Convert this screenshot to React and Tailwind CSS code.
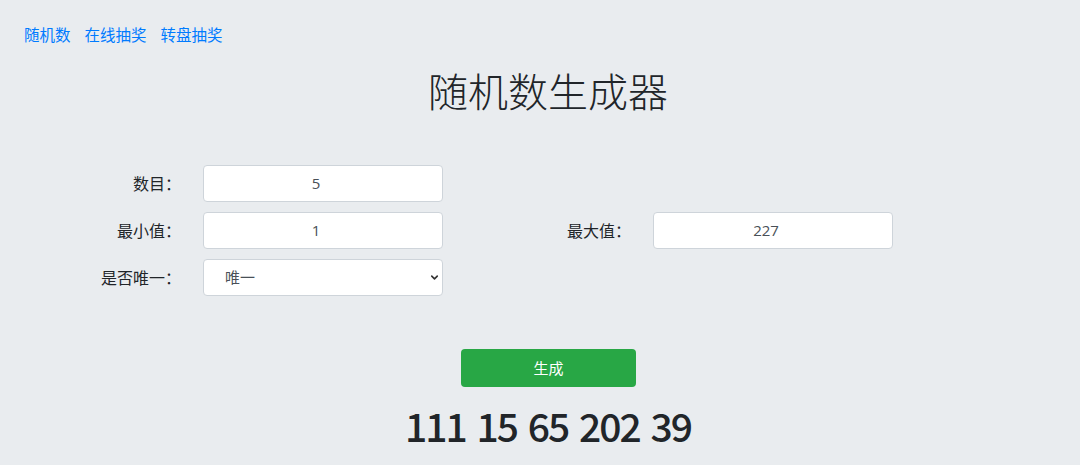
import { ChevronDown } from 'lucide-react'

const font = { fontFamily: '"Open Sans", "Noto Sans CJK SC", sans-serif' }

function Field({ label, labelWidth, value }) {
  return (
    <div className="flex items-center">
      <div className={`${labelWidth} pr-[7px] text-right text-[16px] text-[#212529]`}>{label}</div>
      <div className="ml-[15px] w-[240px] h-[37px] bg-white border border-[#ced4da] rounded-[4px] flex items-center justify-center pr-[14px] text-[15px] text-[#495057]">
        {value}
      </div>
    </div>
  )
}

export default function App() {
  return (
    <div className="min-h-[465px] bg-[#e9ecef] text-[#212529]" style={font}>
      <div className="flex gap-[14px] pl-[24px] pt-[23px] text-[15.5px] text-[#007bff] leading-[24px]">
        <a href="#">随机数</a>
        <a href="#">在线抽奖</a>
        <a href="#">转盘抽奖</a>
      </div>

      <h1 className="mt-[21px] pl-[16px] text-center text-[40px] leading-[48px] font-light">随机数生成器</h1>

      <div className="mt-[49px] flex flex-col gap-[10px]">
        <Field label="数目：" labelWidth="w-[188px]" value="5" />
        <div className="flex items-center">
          <Field label="最小值：" labelWidth="w-[188px]" value="1" />
          <Field label="最大值：" labelWidth="w-[195px]" value="227" />
        </div>
        <div className="flex items-center">
          <div className="w-[188px] pr-[7px] text-right text-[16px]">是否唯一：</div>
          <div className="ml-[15px] w-[240px] h-[37px] bg-white border border-[#ced4da] rounded-[4px] flex items-center justify-between pl-[21px] pr-[2px] text-[15px] text-[#495057]">
            <span>唯一</span>
            <ChevronDown className="w-[11px] h-[11px] text-[#333]" strokeWidth={3.5} />
          </div>
        </div>
      </div>

      <div className="mt-[53px] flex justify-center pl-[17px]">
        <button className="w-[175px] h-[38px] bg-[#28a745] text-white text-[15px] rounded-[4px]">生成</button>
      </div>

      <div
        className="mt-[14px] pl-[16px] text-center text-[39px] leading-[48px] font-medium tracking-[-2px] [word-spacing:4px] text-[#212529]"
        style={{ fontFamily: '"Noto Sans CJK SC", sans-serif' }}
      >
        111 15 65 202 39
      </div>
    </div>
  )
}
